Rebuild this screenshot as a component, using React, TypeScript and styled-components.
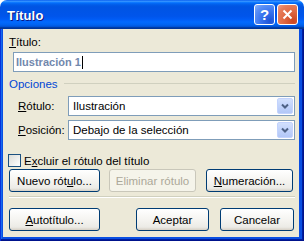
import styled, { createGlobalStyle } from "styled-components";

const GlobalStyle = createGlobalStyle`
  html, body {
    margin: 0;
    padding: 0;
    background: #ffffff;
  }
  body {
    font-family: "Liberation Sans", Arial, sans-serif;
    font-size: 11.5px;
    color: #000;
  }
`;

const Window = styled.div`
  width: 304px;
  height: 241px;
  display: flex;
  flex-direction: column;
  border-radius: 7px 7px 0 0;
  overflow: hidden;
`;

const TitleBar = styled.div`
  height: 29px;
  flex-shrink: 0;
  display: flex;
  align-items: center;
  padding: 0 6px 0 7px;
  background: linear-gradient(
    180deg,
    #0058ee 0%,
    #3a93ff 4%,
    #288eff 6%,
    #127dff 8%,
    #036ffc 10%,
    #0262ee 14%,
    #0057e5 20%,
    #0054e3 24%,
    #0055eb 56%,
    #005bf5 66%,
    #026afe 76%,
    #0062ef 86%,
    #0052d6 92%,
    #0040ab 94%,
    #003092 100%
  );
`;

const TitleText = styled.span`
  flex: 1;
  color: #fff;
  font-weight: bold;
  font-size: 13px;
  letter-spacing: 0.2px;
  text-shadow: 1px 1px #0a1883;
  margin-top: 1px;
`;

const CaptionButton = styled.div<{ $kind: "help" | "close" }>`
  width: 21px;
  height: 21px;
  box-sizing: border-box;
  border: 1px solid #fff;
  border-radius: 3px;
  margin-left: 2px;
  display: flex;
  align-items: center;
  justify-content: center;
  color: #fff;
  font-weight: bold;
  font-size: 15px;
  background: ${(p) =>
    p.$kind === "close"
      ? "radial-gradient(circle at 80% 85%, #cc4621 0%, #e06a45 45%, #e77d5b 75%, #f2a08a 100%)"
      : "radial-gradient(circle at 80% 85%, #1c52d6 0%, #3a75ef 45%, #5b90f6 75%, #8ab1fa 100%)"};
`;

const Frame = styled.div`
  flex: 1;
  display: flex;
  padding: 0 5px 4px 3px;
  background: #0a4fe2;
  box-shadow: inset 1px 0 0 #0831d9, inset -1px -1px 0 #00138c,
    inset -2px -2px 0 #001ea0, inset 2px 0 0 #166aee;
`;

const Client = styled.div`
  flex: 1;
  display: flex;
  flex-direction: column;
  background: #ece9d8;
`;

const Label = styled.div`
  height: 13px;
  line-height: 13px;
  margin: 7px 0 0 6px;
`;

const Key = styled.span`
  text-decoration: underline;
`;

const TextBox = styled.div`
  margin: 3px 4px 0 10px;
  height: 20px;
  box-sizing: border-box;
  border: 1px solid #7f9db9;
  background: #fff;
  display: flex;
  align-items: center;
  padding-left: 2px;
  font-weight: bold;
  font-size: 11px;
  color: #7288ad;
`;

const Caret = styled.span`
  width: 1px;
  height: 13px;
  background: #000;
  margin-left: 1px;
`;

const GroupHeader = styled.div`
  margin: 5px 4px 0 6px;
  height: 13px;
  display: flex;
  align-items: center;
  color: #0046d5;
  &::after {
    content: "";
    flex: 1;
    height: 1px;
    margin-left: 6px;
    background: #d0d0bf;
  }
`;

const FieldRow = styled.div<{ $top: number }>`
  display: flex;
  align-items: center;
  margin: ${(p) => p.$top}px 4px 0 15px;
  height: 20px;
`;

const FieldLabel = styled.div`
  width: 50px;
`;

const Combo = styled.div`
  flex: 1;
  height: 20px;
  box-sizing: border-box;
  border: 1px solid #7f9db9;
  background: #fff;
  display: flex;
  align-items: center;
  padding: 1px;
`;

const ComboText = styled.span`
  flex: 1;
  padding-left: 3px;
`;

const DropButton = styled.div`
  width: 16px;
  height: 16px;
  box-sizing: border-box;
  border: 1px solid #c3d3fd;
  border-radius: 2px;
  background: linear-gradient(180deg, #d2e0fd 0%, #c1d3fb 50%, #b2c7f7 100%);
  display: flex;
  align-items: center;
  justify-content: center;
`;

const CheckRow = styled.div`
  display: flex;
  align-items: center;
  margin: 14px 0 0 5px;
  height: 13px;
`;

const CheckBox = styled.div`
  width: 13px;
  height: 13px;
  box-sizing: border-box;
  border: 1px solid #1c5180;
  background: linear-gradient(135deg, #dcdcd7 0%, #ffffff 100%);
  margin-right: 3px;
`;

const ButtonRow = styled.div<{ $top: number }>`
  display: flex;
  gap: 9px;
  margin: ${(p) => p.$top}px 5px 0 6px;
`;

const Button = styled.div<{ $w: number; $disabled?: boolean; $push?: boolean; $gap?: number }>`
  width: ${(p) => p.$w}px;
  height: 23px;
  box-sizing: border-box;
  border: 1px solid ${(p) => (p.$disabled ? "#c9c7ba" : "#003c74")};
  border-radius: 3px;
  display: flex;
  align-items: center;
  justify-content: center;
  margin-left: ${(p) => (p.$push ? "auto" : p.$gap ? `${p.$gap}px` : "0")};
  color: ${(p) => (p.$disabled ? "#aca899" : "#000")};
  background: ${(p) =>
    p.$disabled
      ? "#f5f4ea"
      : "linear-gradient(180deg, #ffffff 0%, #f3f2ee 60%, #ecebe6 86%, #d6d0c5 100%)"};
`;

const Separator = styled.div`
  margin: 4px 4px 0 6px;
  height: 1px;
  background: #d0d0bf;
  box-shadow: 0 1px 0 #fff;
`;

export default function App() {
  return (
    <>
      <GlobalStyle />
      <Window>
        <TitleBar>
          <TitleText>Título</TitleText>
          <CaptionButton $kind="help">?</CaptionButton>
          <CaptionButton $kind="close">
            <svg width="11" height="11" viewBox="0 0 11 11">
              <path d="M1.5 1.5 L9.5 9.5 M9.5 1.5 L1.5 9.5" stroke="#fff" strokeWidth="2" />
            </svg>
          </CaptionButton>
        </TitleBar>
        <Frame>
          <Client>
            <Label>
              <Key>T</Key>ítulo:
            </Label>
            <TextBox>
              Ilustración 1<Caret />
            </TextBox>
            <GroupHeader>Opciones</GroupHeader>
            <FieldRow $top={6}>
              <FieldLabel>
                <Key>R</Key>ótulo:
              </FieldLabel>
              <Combo>
                <ComboText>Ilustración</ComboText>
                <DropButton>
                  <svg width="8" height="6" viewBox="0 0 8 6">
                    <path d="M1 1.5 L4 4.5 L7 1.5" stroke="#4d6185" strokeWidth="2" fill="none" />
                  </svg>
                </DropButton>
              </Combo>
            </FieldRow>
            <FieldRow $top={4}>
              <FieldLabel>
                <Key>P</Key>osición:
              </FieldLabel>
              <Combo>
                <ComboText>Debajo de la selección</ComboText>
                <DropButton>
                  <svg width="8" height="6" viewBox="0 0 8 6">
                    <path d="M1 1.5 L4 4.5 L7 1.5" stroke="#4d6185" strokeWidth="2" fill="none" />
                  </svg>
                </DropButton>
              </Combo>
            </FieldRow>
            <CheckRow>
              <CheckBox />
              <span>
                E<Key>x</Key>cluir el rótulo del título
              </span>
            </CheckRow>
            <ButtonRow $top={2}>
              <Button $w={91}>
                Nuevo rót<Key>u</Key>lo...
              </Button>
              <Button $w={87} $disabled>
                Eliminar rótulo
              </Button>
              <Button $w={87} $gap={1}>
                <Key>N</Key>umeración...
              </Button>
            </ButtonRow>
            <Separator />
            <ButtonRow $top={11}>
              <Button $w={91}>
                <Key>A</Key>utotítulo...
              </Button>
              <Button $w={73} $push>
                Aceptar
              </Button>
              <Button $w={74} $gap={2}>
                Cancelar
              </Button>
            </ButtonRow>
          </Client>
        </Frame>
      </Window>
    </>
  );
}
